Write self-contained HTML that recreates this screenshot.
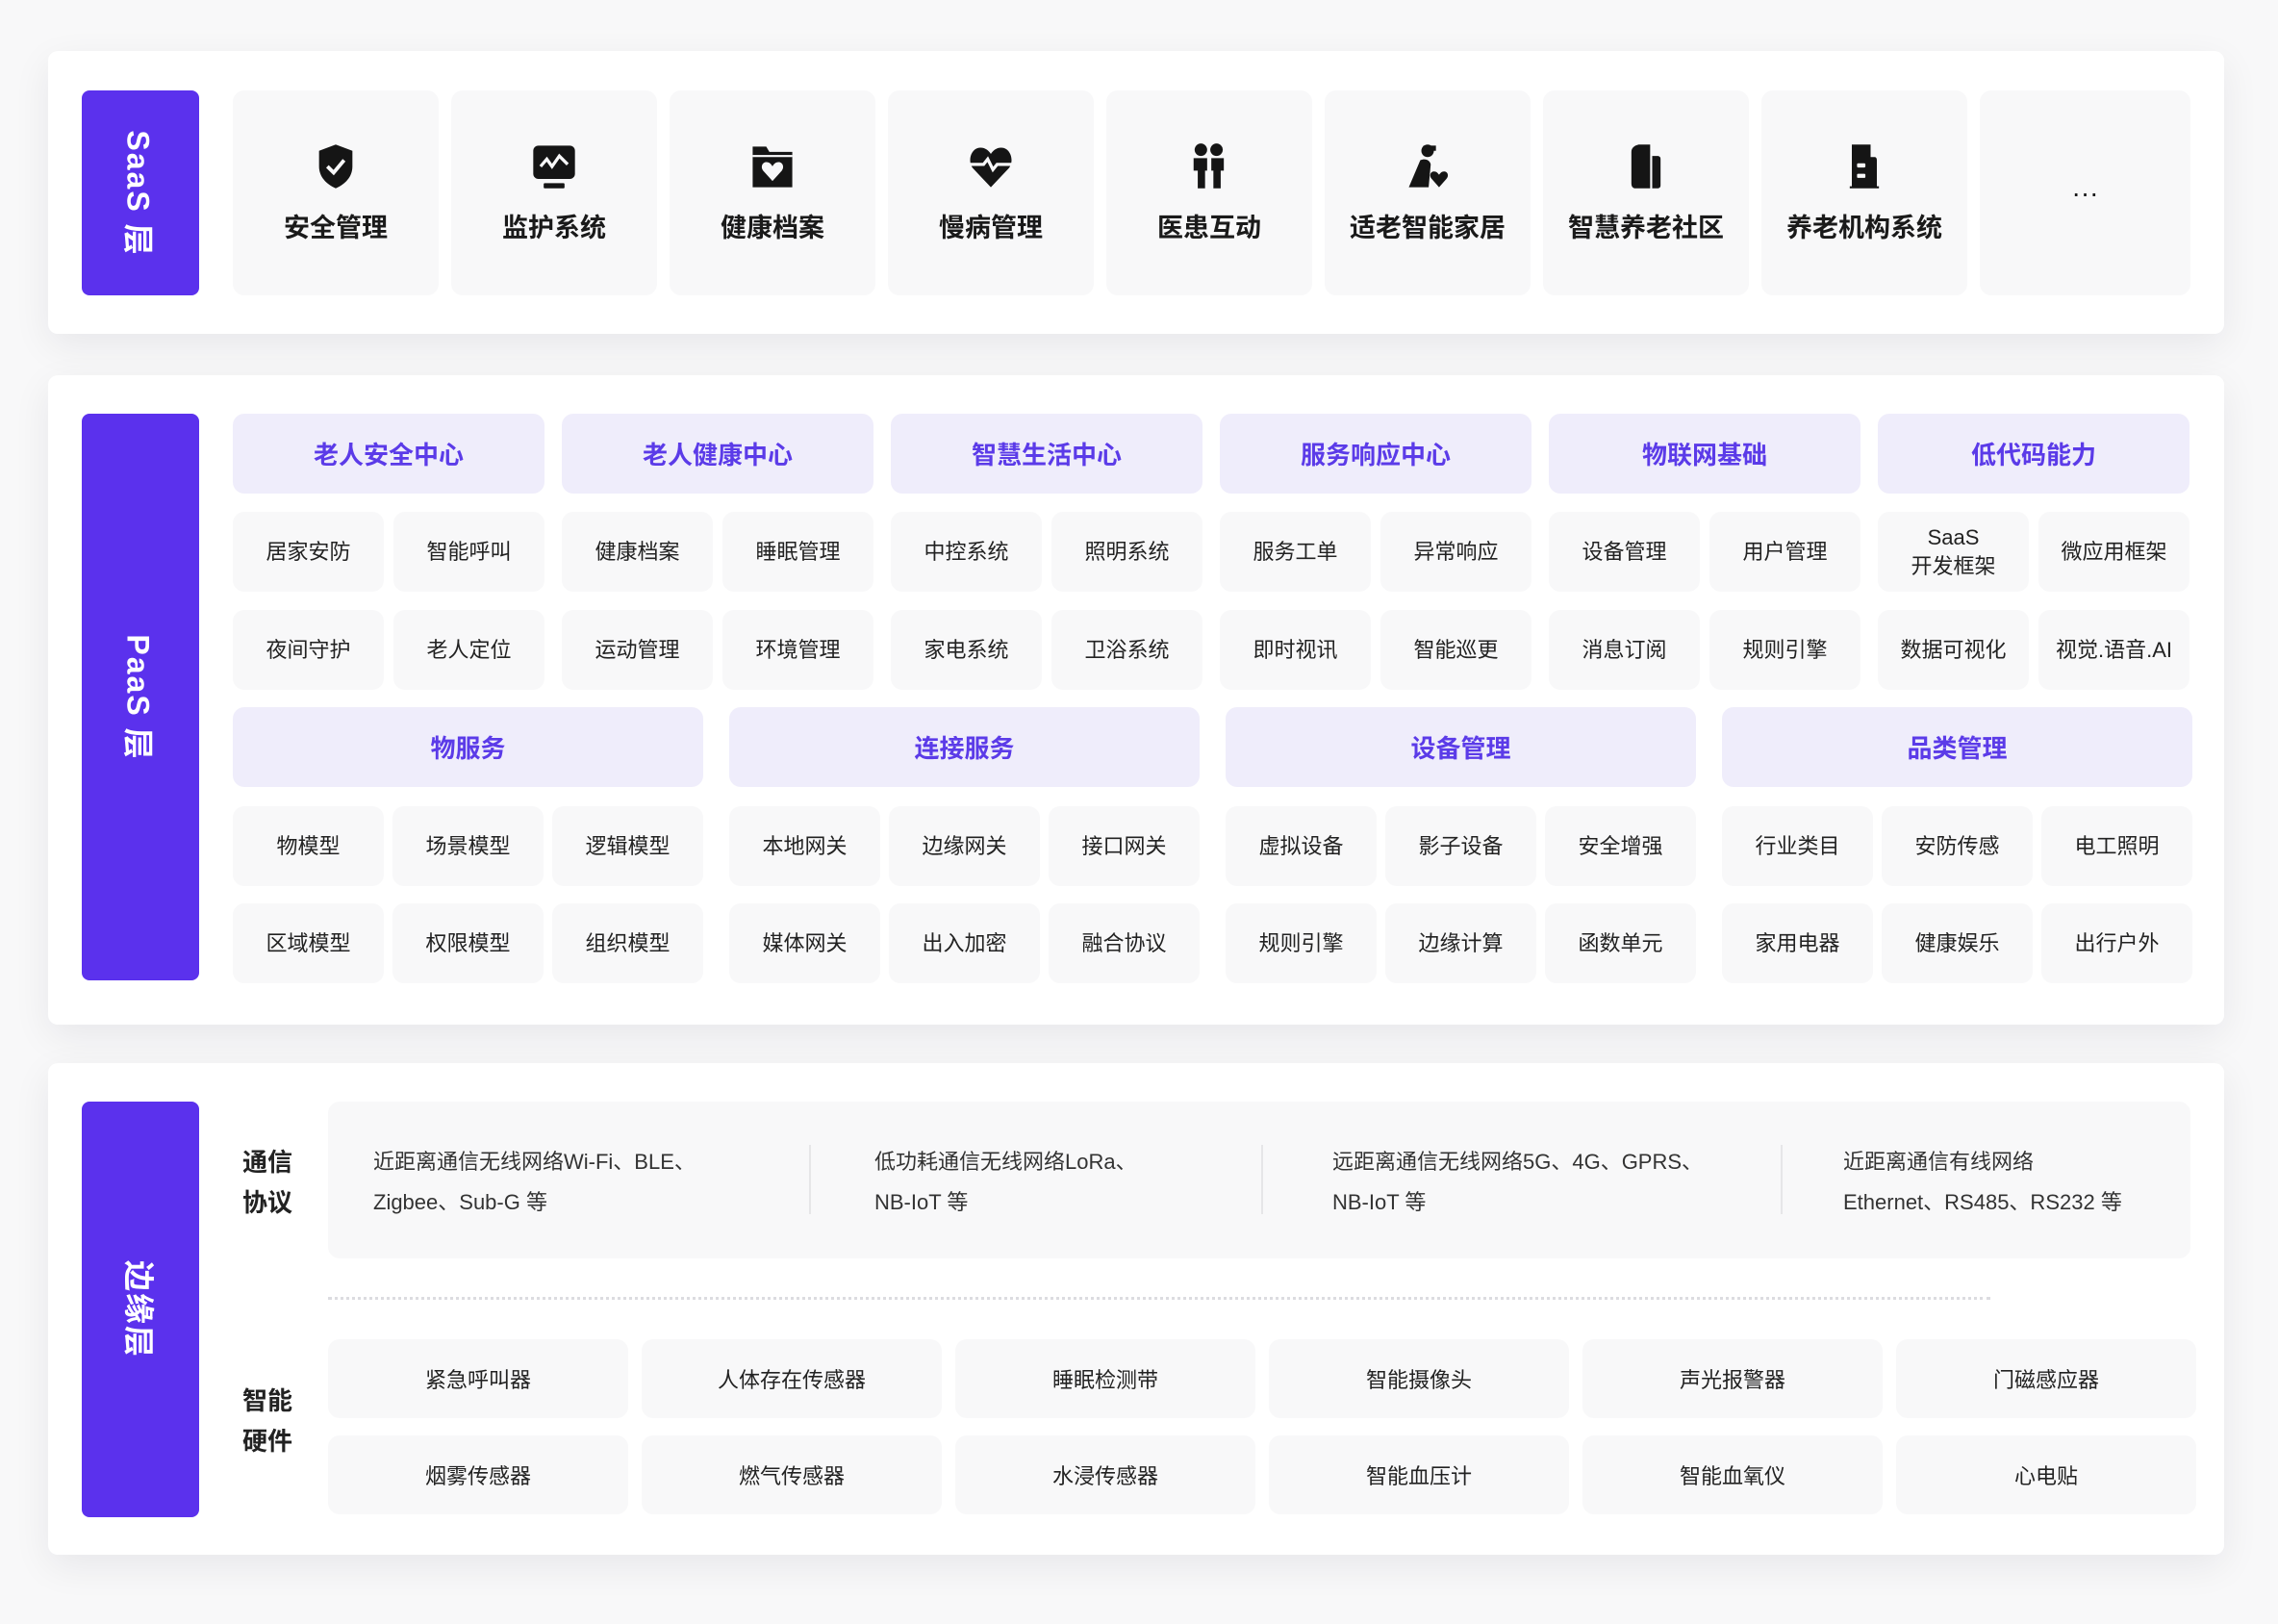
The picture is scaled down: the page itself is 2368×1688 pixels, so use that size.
<!DOCTYPE html>
<html><head><meta charset="utf-8"><style>
*{margin:0;padding:0;box-sizing:border-box}
body{width:2368px;height:1688px;background:#f8f8f9;font-family:"Liberation Sans","Noto Sans CJK SC",sans-serif;position:relative;overflow:hidden}
.card{position:absolute;left:50px;width:2262px;background:#fff;border-radius:10px;box-shadow:0 12px 40px rgba(20,20,40,0.07)}
.lab{position:absolute;left:85px;width:122px;background:#5b31ed;border-radius:8px;display:flex;align-items:center;justify-content:center}
.lab span{transform:rotate(90deg);color:#fff;font-weight:700;font-size:32px;white-space:nowrap;letter-spacing:2px}
.a{position:absolute;display:flex;align-items:center;justify-content:center;text-align:center;border-radius:12px}
.t{background:#f8f8f9;width:214px;top:94px;height:213px;flex-direction:column;font-size:27px;font-weight:600;color:#1a1a1a}
.t svg{width:52px;height:52px;margin-bottom:16px;margin-top:0px}
.h{background:#efedfb;color:#5b3be8;font-size:26px;font-weight:600;height:83px}
.c{background:#f8f8f9;color:#222;font-size:22px;width:157px;height:83px;line-height:30px}
.hw{background:#f8f8f9;color:#222;font-size:22px;width:312px;height:82px}
.side{position:absolute;left:252px;font-size:26px;font-weight:700;color:#222;line-height:42px}
.ct{position:absolute;top:1187px;font-size:22px;color:#333;line-height:42px}
.sep{position:absolute;top:1190px;width:2px;height:72px;background:#e6e6e8}
</style></head><body>

<div class="card" style="top:53px;height:294px"></div>
<div class="lab" style="top:94px;height:213px"><span>SaaS 层</span></div>

<div class="a t" style="left:242px"><svg viewBox="0 0 48 48"><path d="M24 3 L40 9 V24 C40 34 33 41 24 45 C15 41 8 34 8 24 V9 Z" fill="#151515"/><path d="M16 24 L22 30 L32 18" stroke="#f8f8f9" stroke-width="3.5" fill="none"/></svg>安全管理</div>
<div class="a t" style="left:469px"><svg viewBox="0 0 48 48"><rect x="4" y="4" width="40" height="32" rx="5" fill="#151515"/><rect x="14" y="40" width="20" height="5" rx="1" fill="#151515"/><path d="M11 24 L17 17 L22 24 L29 14 L37 22" stroke="#f8f8f9" stroke-width="3" fill="none"/></svg>监护系统</div>
<div class="a t" style="left:696px"><svg viewBox="0 0 48 48"><path d="M5 5 H18 L21 10 H43 V44 H5 Z" fill="#151515"/><rect x="5" y="13" width="38" height="2" fill="#f8f8f9"/><path d="M24 38 L15 28 C12 24 15 19 19 20 C21 20 23 22 24 24 C25 22 27 20 29 20 C33 19 36 24 33 28 Z" fill="#f8f8f9"/></svg>健康档案</div>
<div class="a t" style="left:923px"><svg viewBox="0 0 48 48"><path d="M24 44 L7 26 C1 19 5 6 14 6 C19 6 22 9 24 12 C26 9 29 6 34 6 C43 6 47 19 41 26 Z" fill="#151515"/><path d="M4 22 H17 L21 17 L26 27 L30 22 H44" stroke="#f8f8f9" stroke-width="3" fill="none"/></svg>慢病管理</div>
<div class="a t" style="left:1150px"><svg viewBox="0 0 48 48"><circle cx="16" cy="8" r="6" fill="#151515"/><circle cx="31" cy="8" r="6" fill="#151515"/><path d="M9 16 H22 V28 H20 V45 H13 V28 H9 Z" fill="#151515"/><path d="M26 16 H38 V28 H35 V45 H28 V28 H26 Z" fill="#151515"/></svg>医患互动</div>
<div class="a t" style="left:1377px"><svg viewBox="0 0 48 48"><circle cx="24" cy="9" r="6" fill="#151515"/><path d="M20 4 H32 V9 H20Z" fill="#151515"/><path d="M17 18 C22 16 26 18 27 22 L25 44 H6 Z" fill="#151515"/><path d="M35 44 L28 36 C25 33 27 28 31 29 C33 29 34 31 35 32 C36 31 37 29 39 29 C43 28 45 33 42 36 Z" fill="#151515"/></svg>适老智能家居</div>
<div class="a t" style="left:1604px"><svg viewBox="0 0 48 48"><path d="M10 10 C10 6 13 4 17 3 L28 3 V45 H14 C11 45 10 43 10 40 Z" fill="#151515"/><path d="M30 14 H35 C37 14 38 15 38 17 V42 C38 44 37 45 35 45 H30 Z" fill="#151515"/></svg>智慧养老社区</div>
<div class="a t" style="left:1831px"><svg viewBox="0 0 48 48"><path d="M12 3 H30 V15 H34 C35 15 36 16 36 18 V43 H38 V45 H10 V43 H12 Z" fill="#151515"/><rect x="17" y="21" width="8" height="4" rx="1" fill="#f8f8f9"/><rect x="17" y="31" width="8" height="4" rx="1" fill="#f8f8f9"/></svg>养老机构系统</div>
<div class="a t" style="left:2058px;width:219px;font-size:28px;font-weight:400">···</div>

<div class="card" style="top:390px;height:675px"></div>
<div class="lab" style="top:430px;height:589px"><span>PaaS 层</span></div>

<div class="a h" style="left:242px;top:430px;width:324px">老人安全中心</div>
<div class="a h" style="left:584px;top:430px;width:324px">老人健康中心</div>
<div class="a h" style="left:926px;top:430px;width:324px">智慧生活中心</div>
<div class="a h" style="left:1268px;top:430px;width:324px">服务响应中心</div>
<div class="a h" style="left:1610px;top:430px;width:324px">物联网基础</div>
<div class="a h" style="left:1952px;top:430px;width:324px">低代码能力</div>

<div class="a c" style="left:242px;top:532px">居家安防</div>
<div class="a c" style="left:409px;top:532px">智能呼叫</div>
<div class="a c" style="left:584px;top:532px">健康档案</div>
<div class="a c" style="left:751px;top:532px">睡眠管理</div>
<div class="a c" style="left:926px;top:532px">中控系统</div>
<div class="a c" style="left:1093px;top:532px">照明系统</div>
<div class="a c" style="left:1268px;top:532px">服务工单</div>
<div class="a c" style="left:1435px;top:532px">异常响应</div>
<div class="a c" style="left:1610px;top:532px">设备管理</div>
<div class="a c" style="left:1777px;top:532px">用户管理</div>
<div class="a c" style="left:1952px;top:532px">SaaS<br>开发框架</div>
<div class="a c" style="left:2119px;top:532px">微应用框架</div>

<div class="a c" style="left:242px;top:634px">夜间守护</div>
<div class="a c" style="left:409px;top:634px">老人定位</div>
<div class="a c" style="left:584px;top:634px">运动管理</div>
<div class="a c" style="left:751px;top:634px">环境管理</div>
<div class="a c" style="left:926px;top:634px">家电系统</div>
<div class="a c" style="left:1093px;top:634px">卫浴系统</div>
<div class="a c" style="left:1268px;top:634px">即时视讯</div>
<div class="a c" style="left:1435px;top:634px">智能巡更</div>
<div class="a c" style="left:1610px;top:634px">消息订阅</div>
<div class="a c" style="left:1777px;top:634px">规则引擎</div>
<div class="a c" style="left:1952px;top:634px">数据可视化</div>
<div class="a c" style="left:2119px;top:634px">视觉.语音.AI</div>

<div class="a h" style="left:242px;top:735px;width:489px">物服务</div>
<div class="a h" style="left:758px;top:735px;width:489px">连接服务</div>
<div class="a h" style="left:1274px;top:735px;width:489px">设备管理</div>
<div class="a h" style="left:1790px;top:735px;width:489px">品类管理</div>

<div class="a c" style="left:242px;top:838px">物模型</div>
<div class="a c" style="left:408px;top:838px">场景模型</div>
<div class="a c" style="left:574px;top:838px">逻辑模型</div>
<div class="a c" style="left:758px;top:838px">本地网关</div>
<div class="a c" style="left:924px;top:838px">边缘网关</div>
<div class="a c" style="left:1090px;top:838px">接口网关</div>
<div class="a c" style="left:1274px;top:838px">虚拟设备</div>
<div class="a c" style="left:1440px;top:838px">影子设备</div>
<div class="a c" style="left:1606px;top:838px">安全增强</div>
<div class="a c" style="left:1790px;top:838px">行业类目</div>
<div class="a c" style="left:1956px;top:838px">安防传感</div>
<div class="a c" style="left:2122px;top:838px">电工照明</div>

<div class="a c" style="left:242px;top:939px">区域模型</div>
<div class="a c" style="left:408px;top:939px">权限模型</div>
<div class="a c" style="left:574px;top:939px">组织模型</div>
<div class="a c" style="left:758px;top:939px">媒体网关</div>
<div class="a c" style="left:924px;top:939px">出入加密</div>
<div class="a c" style="left:1090px;top:939px">融合协议</div>
<div class="a c" style="left:1274px;top:939px">规则引擎</div>
<div class="a c" style="left:1440px;top:939px">边缘计算</div>
<div class="a c" style="left:1606px;top:939px">函数单元</div>
<div class="a c" style="left:1790px;top:939px">家用电器</div>
<div class="a c" style="left:1956px;top:939px">健康娱乐</div>
<div class="a c" style="left:2122px;top:939px">出行户外</div>

<div class="card" style="top:1105px;height:511px"></div>
<div class="lab" style="top:1145px;height:432px"><span>边缘层</span></div>

<div class="side" style="top:1187px">通信<br>协议</div>
<div style="position:absolute;left:341px;top:1145px;width:1936px;height:163px;background:#f8f8f9;border-radius:12px"></div>
<div class="ct" style="left:388px">近距离通信无线网络Wi-Fi、BLE、<br>Zigbee、Sub-G 等</div>
<div class="sep" style="left:841px"></div>
<div class="ct" style="left:909px">低功耗通信无线网络LoRa、<br>NB-IoT 等</div>
<div class="sep" style="left:1311px"></div>
<div class="ct" style="left:1385px">远距离通信无线网络5G、4G、GPRS、<br>NB-IoT 等</div>
<div class="sep" style="left:1851px"></div>
<div class="ct" style="left:1916px">近距离通信有线网络<br>Ethernet、RS485、RS232 等</div>

<div style="position:absolute;left:341px;top:1348px;width:1728px;border-top:3px dotted #dcdce0"></div>

<div class="side" style="top:1435px">智能<br>硬件</div>
<div class="a hw" style="left:341px;top:1392px">紧急呼叫器</div>
<div class="a hw" style="left:667px;top:1392px">人体存在传感器</div>
<div class="a hw" style="left:993px;top:1392px">睡眠检测带</div>
<div class="a hw" style="left:1319px;top:1392px">智能摄像头</div>
<div class="a hw" style="left:1645px;top:1392px">声光报警器</div>
<div class="a hw" style="left:1971px;top:1392px">门磁感应器</div>
<div class="a hw" style="left:341px;top:1492px">烟雾传感器</div>
<div class="a hw" style="left:667px;top:1492px">燃气传感器</div>
<div class="a hw" style="left:993px;top:1492px">水浸传感器</div>
<div class="a hw" style="left:1319px;top:1492px">智能血压计</div>
<div class="a hw" style="left:1645px;top:1492px">智能血氧仪</div>
<div class="a hw" style="left:1971px;top:1492px">心电贴</div>

</body></html>
